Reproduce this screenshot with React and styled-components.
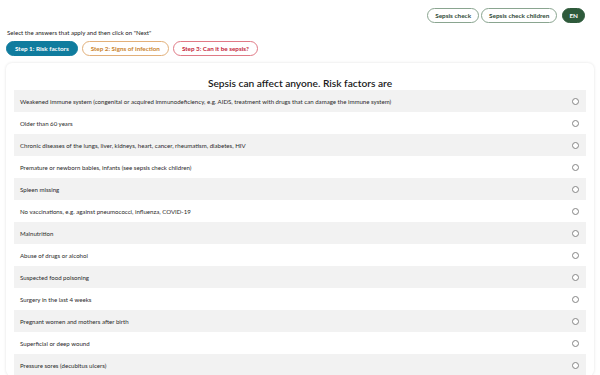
import styled, { createGlobalStyle } from "styled-components";

const GlobalStyle = createGlobalStyle`
  body {
    margin: 0;
    background: #ffffff;
    font-family: "Lato", "Inter", sans-serif;
    color: #222;
  }
`;

const Page = styled.div`
  width: 600px;
  padding: 8px 6px 0 6px;
  box-sizing: border-box;
`;

const TopBar = styled.div`
  display: flex;
  justify-content: flex-end;
  align-items: center;
  gap: 2px;
  padding-right: 9px;
`;

const NavPill = styled.button`
  height: 15px;
  padding: 0 7px;
  border-radius: 8px;
  border: 1px solid #8aa590;
  background: #fff;
  color: #2f4a36;
  font-family: inherit;
  font-size: 6.4px;
  font-weight: 700;
  cursor: pointer;
`;

const LangPill = styled(NavPill)`
  margin-left: 3px;
  background: #2e5a3b;
  border-color: #2e5a3b;
  color: #fff;
  padding: 0 6px;
  min-width: 22px;
`;

const Hint = styled.p`
  margin: 6px 0 0 1px;
  font-size: 6.1px;
  color: #222;
`;

const Steps = styled.div`
  display: flex;
  gap: 4px;
  margin-top: 5px;
`;

const StepPill = styled.button`
  height: 15px;
  padding: 0 8px;
  border-radius: 8px;
  font-family: inherit;
  font-size: 6.3px;
  font-weight: 700;
  border: 1px solid ${(p) => p.$border};
  background: ${(p) => p.$bg};
  color: ${(p) => p.$color};
`;

const Card = styled.div`
  margin-top: 7px;
  background: #fff;
  border-radius: 6px;
  box-shadow: 0 0 3px rgba(0, 0, 0, 0.12);
  padding: 14px 8px 0 8px;
`;

const Title = styled.h2`
  margin: 0 0 1px 0;
  text-align: center;
  font-size: 10.2px;
  font-weight: 600;
  color: #1a1a1a;
`;

const Row = styled.label`
  display: flex;
  align-items: center;
  justify-content: space-between;
  height: 22px;
  padding: 0 7px 0 6px;
  background: ${(p) => (p.$shaded ? "#f2f2f2" : "#fff")};
  font-size: 6.1px;
  color: #2a2a2a;
`;

const Radio = styled.span`
  width: 5px;
  height: 5px;
  border-radius: 50%;
  border: 1px solid #858585;
  background: #fff;
  flex-shrink: 0;
`;

const factors = [
  "Weakened immune system (congenital or acquired immunodeficiency, e.g. AIDS, treatment with drugs that can damage the immune system)",
  "Older than 60 years",
  "Chronic diseases of the lungs, liver, kidneys, heart, cancer, rheumatism, diabetes, HIV",
  "Premature or newborn babies, infants (see sepsis check children)",
  "Spleen missing",
  "No vaccinations, e.g. against pneumococci, influenza, COVID-19",
  "Malnutrition",
  "Abuse of drugs or alcohol",
  "Suspected food poisoning",
  "Surgery in the last 4 weeks",
  "Pregnant women and mothers after birth",
  "Superficial or deep wound",
  "Pressure sores (decubitus ulcers)",
];

export default function App() {
  return (
    <>
      <GlobalStyle />
      <Page>
        <TopBar>
          <NavPill>Sepsis check</NavPill>
          <NavPill>Sepsis check children</NavPill>
          <LangPill>EN</LangPill>
        </TopBar>
        <Hint>Select the answers that apply and then click on "Next"</Hint>
        <Steps>
          <StepPill $bg="#107c9e" $border="#107c9e" $color="#fff">
            Step 1: Risk factors
          </StepPill>
          <StepPill $bg="#fff" $border="#e2b07a" $color="#c9822c">
            Step 2: Signs of infection
          </StepPill>
          <StepPill $bg="#fff" $border="#e07a86" $color="#c4243a">
            Step 3: Can it be sepsis?
          </StepPill>
        </Steps>
        <Card>
          <Title>Sepsis can affect anyone. Risk factors are</Title>
          {factors.map((f, i) => (
            <Row key={f} $shaded={i % 2 === 0}>
              <span>{f}</span>
              <Radio />
            </Row>
          ))}
        </Card>
      </Page>
    </>
  );
}
